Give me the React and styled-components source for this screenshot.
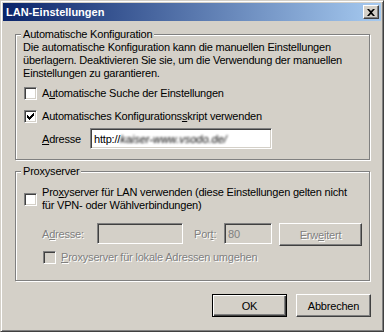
import React from 'react';
import styled, { createGlobalStyle } from 'styled-components';

const GlobalStyle = createGlobalStyle`
  html, body {
    margin: 0;
    padding: 0;
    background: #d4d0c8;
  }
  body {
    font-family: "Liberation Sans", Arial, sans-serif;
    font-size: 11px;
    letter-spacing: -0.2px;
    color: #000;
  }
`;

const CheckMark = () => (
  <svg width="7" height="7" viewBox="0 0 7 7">
    <path d="M0 2h1v1h1v1h1V3h1V2h1V1h1V0h1v3h-1v1h-1v1h-1v1h-1v1H2V6H1V5H0z" fill="#000" />
  </svg>
);

const CloseGlyph = () => (
  <svg width="8" height="7" viewBox="0 0 8 7">
    <path d="M0 0h2l2 2 2-2h2L5 3.5 8 7H6L4 5 2 7H0l3-3.5z" fill="#000" />
  </svg>
);

const App = () => {
  return (
    <>
      <GlobalStyle />
      <Window>
        <TitleBar>
          <Title>LAN-Einstellungen</Title>
          <CloseButton aria-label="Schließen"><CloseGlyph /></CloseButton>
        </TitleBar>
        <Body>
          <Group $pb={10}>
            <Legend>Automatische Konfiguration</Legend>
            <Description>
              Die automatische Konfiguration kann die manuellen Einstellungen<br />
              überlagern. Deaktivieren Sie sie, um die Verwendung der manuellen<br />
              Einstellungen zu garantieren.
            </Description>
            <CheckRow $mt={7}>
              <Box />
              <Label>A<u>u</u>tomatische Suche der Einstellungen</Label>
            </CheckRow>
            <CheckRow $mt={10}>
              <Box><CheckMark /></Box>
              <Label>Automatisches Konfigurations<u>s</u>kript verwenden</Label>
            </CheckRow>
            <AddressRow>
              <FieldLabel $w={48}><u>A</u>dresse</FieldLabel>
              <Field $w={182}>
                http://<Smudge>kaiser-www.vsodo.de/</Smudge>
              </Field>
            </AddressRow>
          </Group>

          <Group $pb={16} $mt={4}>
            <Legend>Proxyserver</Legend>
            <CheckRow $mt={8} $center>
              <Box />
              <Label>
                Pro<u>x</u>yserver für LAN verwenden (diese Einstellungen gelten nicht<br />
                für VPN- oder Wählverbindungen)
              </Label>
            </CheckRow>
            <ProxyRow>
              <FieldLabel $w={55} $disabled>A<u>d</u>resse:</FieldLabel>
              <Field $w={86} $disabled />
              <FieldLabel $w={30} $disabled $ml={11}>Por<u>t</u>:</FieldLabel>
              <Field $w={48} $disabled $grey>80</Field>
              <Button $w={83} $ml={7} disabled>Erw<u>e</u>itert</Button>
            </ProxyRow>
            <CheckRow $mt={5} $indent={20}>
              <Box $disabled />
              <Label $disabled><u>P</u>roxyserver für lokale Adressen umgehen</Label>
            </CheckRow>
          </Group>

          <Footer>
            <Button $w={75} $default>OK</Button>
            <Button $w={75}>Abbrechen</Button>
          </Footer>
        </Body>
      </Window>
    </>
  );
};

export default App;

const Window = styled.div`
  width: 384px;
  height: 332px;
  box-sizing: border-box;
  background: #d4d0c8;
  border: 1px solid;
  border-color: #d4d0c8 #404040 #404040 #d4d0c8;
  box-shadow: inset 1px 1px #fff, inset -1px -1px #808080;
  padding: 2px;
  display: flex;
  flex-direction: column;
`;

const TitleBar = styled.div`
  height: 18px;
  flex: none;
  background: linear-gradient(to right, #0a246a, #a6caf0);
  display: flex;
  align-items: center;
  justify-content: space-between;
  padding: 0 2px 0 3px;
`;

const Title = styled.span`
  color: #fff;
  font-weight: bold;
  font-size: 11px;
  letter-spacing: 0;
  line-height: 14px;
`;

const CloseButton = styled.button`
  width: 16px;
  height: 14px;
  padding: 0;
  box-sizing: border-box;
  display: flex;
  align-items: center;
  justify-content: center;
  background: #d4d0c8;
  border: 1px solid;
  border-color: #fff #404040 #404040 #fff;
  box-shadow: inset -1px -1px #808080;
`;

const Body = styled.div`
  flex: 1;
  display: flex;
  flex-direction: column;
  padding: 6px 10px 0 12px;
`;

const Group = styled.fieldset`
  margin: ${p => p.$mt || 0}px 1px 0 0;
  padding: 0 7px ${p => p.$pb}px 7px;
  border: 1px solid #808080;
  box-shadow: inset 1px 1px #fff, 1px 1px #fff;
  display: flex;
  flex-direction: column;
  min-width: 0;
`;

const Legend = styled.legend`
  margin-left: -2px;
  padding: 0 2px;
  line-height: 14px;
  background: #d4d0c8;
`;

const Description = styled.div`
  line-height: 13px;
  white-space: nowrap;
`;

const CheckRow = styled.div`
  display: flex;
  align-items: ${p => (p.$center ? 'center' : 'flex-start')};
  margin-top: ${p => p.$mt}px;
  padding-left: ${p => p.$indent || 1}px;
`;

const Box = styled.span`
  width: 13px;
  height: 13px;
  box-sizing: border-box;
  flex: none;
  display: flex;
  align-items: center;
  justify-content: center;
  background: ${p => (p.$disabled ? '#d4d0c8' : '#fff')};
  border: 1px solid;
  border-color: #808080 #fff #fff #808080;
  box-shadow: inset 1px 1px #404040, inset -1px -1px #d4d0c8;
`;

const Label = styled.span`
  margin-left: 5px;
  line-height: 13px;
  white-space: nowrap;
  color: ${p => (p.$disabled ? '#808080' : '#000')};
  text-shadow: ${p => (p.$disabled ? '1px 1px #fff' : 'none')};
`;

const AddressRow = styled.div`
  display: flex;
  align-items: center;
  margin-top: 5px;
  padding-left: 19px;
`;

const ProxyRow = styled.div`
  display: flex;
  align-items: flex-start;
  margin-top: 11px;
  padding-left: 19px;
  height: 23px;

  & > span {
    align-self: center;
    margin-top: -2px;
  }
`;

const FieldLabel = styled.span`
  width: ${p => p.$w}px;
  margin-left: ${p => p.$ml || 0}px;
  flex: none;
  white-space: nowrap;
  color: ${p => (p.$disabled ? '#808080' : '#000')};
  text-shadow: ${p => (p.$disabled ? '1px 1px #fff' : 'none')};
`;

const Field = styled.div`
  width: ${p => p.$w}px;
  height: 21px;
  box-sizing: border-box;
  flex: none;
  display: flex;
  align-items: center;
  padding-left: 3px;
  white-space: nowrap;
  overflow: hidden;
  background: ${p => (p.$disabled ? '#d4d0c8' : '#fff')};
  color: ${p => (p.$grey ? '#808080' : '#000')};
  border: 1px solid;
  border-color: #808080 #fff #fff #808080;
  box-shadow: inset 1px 1px #404040, inset -1px -1px #d4d0c8;
`;

const Smudge = styled.span`
  filter: blur(0.9px);
  letter-spacing: 0;
  font-style: italic;
  color: #000;
`;

const Button = styled.button`
  width: ${p => p.$w}px;
  height: 23px;
  margin-left: ${p => p.$ml || 0}px;
  flex: none;
  box-sizing: border-box;
  padding: 0;
  font-family: inherit;
  font-size: 11px;
  letter-spacing: inherit;
  background: #d4d0c8;
  color: #000;
  border: 1px solid;
  border-color: ${p => (p.$default ? '#000' : '#fff #404040 #404040 #fff')};
  box-shadow: ${p =>
    p.$default
      ? 'inset 1px 1px #fff, inset -1px -1px #404040, inset -2px -2px #808080'
      : 'inset -1px -1px #808080'};

  &:disabled {
    color: #808080;
    text-shadow: 1px 1px #fff;
  }
`;

const Footer = styled.div`
  display: flex;
  justify-content: flex-end;
  gap: 9px;
  margin-top: 13px;
`;
